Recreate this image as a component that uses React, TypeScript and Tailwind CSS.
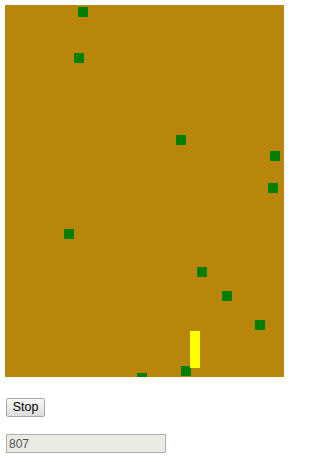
import React from "react";

const greens: [number, number][] = [
  [73, 2],
  [69, 48],
  [171, 130],
  [265, 146],
  [263, 178],
  [59, 224],
  [192, 262],
  [217, 286],
  [250, 315],
  [176, 361],
  [132, 368],
];

export default function App() {
  return (
    <div className="pt-[5px] pl-[5px] bg-white min-h-[462px]" style={{ fontFamily: '"Liberation Sans", Arial, sans-serif' }}>
      <div className="relative w-[279px] h-[372px] bg-[#b8860b] overflow-hidden">
        {greens.map(([x, y], i) => (
          <div
            key={i}
            className="absolute w-[10px] h-[10px] bg-[#008000]"
            style={{ left: x, top: y }}
          />
        ))}
        <div className="absolute w-[10px] h-[37px] bg-[#ffff00]" style={{ left: 185, top: 326 }} />
      </div>
      <div className="mt-[21px] pl-[1px]">
        <button className="h-[19px] w-[39px] border border-[#a9a9a9] rounded-[2px] bg-gradient-to-b from-[#fafafa] to-[#dcdcdc] text-[12.5px] leading-none text-black flex items-center justify-center">
          Stop
        </button>
      </div>
      <div className="mt-[17px] pl-[1px]">
        <input
          disabled
          value="807"
          readOnly
          className="block h-[19px] w-[160px] border border-[#b0b0b0] bg-[#ebebe4] text-[12px] text-[#545454] px-[2px] outline-none"
        />
      </div>
    </div>
  );
}
